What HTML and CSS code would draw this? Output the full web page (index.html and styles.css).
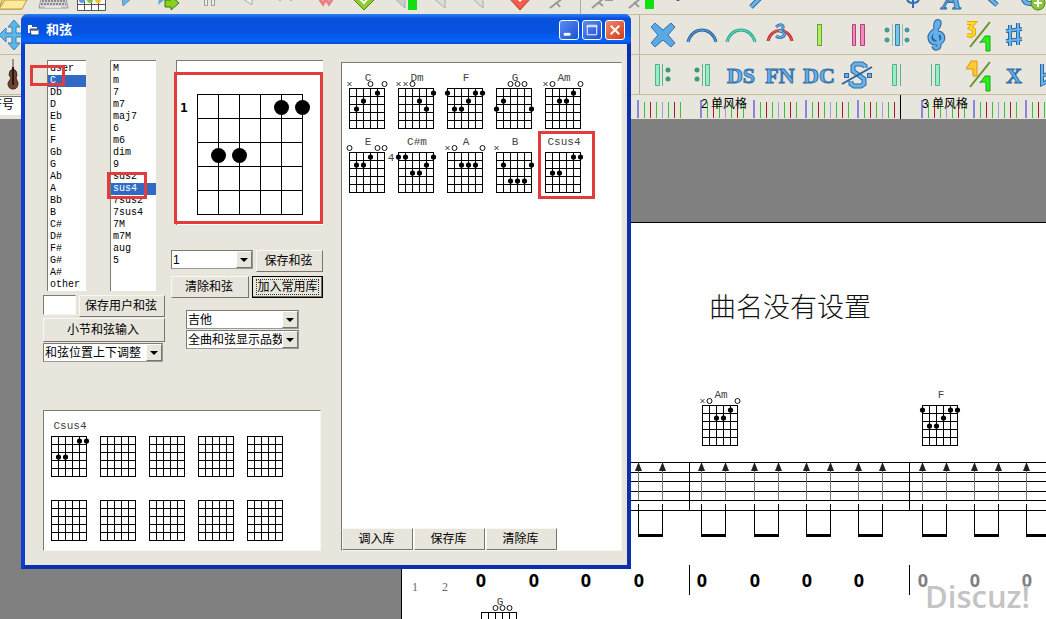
FILE: index.html
```html
<!DOCTYPE html>
<html lang="zh-CN">
<head>
<meta charset="utf-8">
<title>和弦</title>
<link rel="stylesheet" href="styles.css">
</head>
<body>
<div class="app">
  <div class="toolbar toolbar-files">
    <button class="tool" aria-label="打开"><svg viewBox="0 0 39 14"><path d="M8 0L5 9H28L32 -3" fill="#f7dc7a" stroke="#b89a3c"/><path d="M5 9L11 0H33L28 9Z" fill="#ffeb9a" stroke="#b89a3c"/></svg></button>
    <button class="tool" aria-label="键盘"><svg viewBox="0 0 39 14"><path d="M9 -6H32L35 8H6Z" fill="#d4d4d4" stroke="#9a9a9a"/><path d="M9 1H32M8 4H33" stroke="#8a8a8a" stroke-width="2" stroke-dasharray="2 1"/><path d="M12 7H28" stroke="#fff"/></svg></button>
    <button class="tool" aria-label="和弦图"><svg viewBox="0 0 39 14"><path d="M5.500 -2V10.500H33.500V-2M12.500 -2V10M19.500 -2V10M26.500 -2V10M5 4.500H34" fill="#fff" stroke="#555"/><circle cx="10" cy="0" r="3" fill="#5b9be0"/><circle cx="18" cy="0" r="3" fill="#82c341"/><circle cx="26" cy="0" r="3" fill="#f2c230"/></svg></button>
    <button class="tool" aria-label="编辑"><svg viewBox="0 0 39 14"><path d="M11 -2L12 6L21 -2" fill="#6ab4e8" stroke="#5590c0"/></svg></button>
    <button class="tool" aria-label="导出"><svg viewBox="0 0 39 14"><path d="M9 -1L8 5L15 -1" fill="#5aa4e0"/><path d="M15 0H21V-4L29 3L21 10V7H15Z" fill="#8ad020" stroke="#39770d"/></svg></button>
    <button class="tool" aria-label="暂停"><svg viewBox="0 0 39 14"><path d="M15.500 -2V5.500H18.500V-2M22.500 -2V5.500H25.500V-2" fill="#eee" stroke="#999"/></svg></button>
    <button class="tool" aria-label="后退"><svg viewBox="0 0 39 14"><path d="M15 -1L24 5V-2" fill="#eee" stroke="#aaa"/></svg></button>
    <button class="tool" aria-label="标记"><svg viewBox="0 0 39 14"><path d="M11 -2L13 1L15 -2M22 -2L24 1L26 -2" fill="none" stroke="#aaa"/></svg></button>
    <button class="tool" aria-label="波形"><svg viewBox="0 0 39 14"><path d="M13 -2L17 4L20 -1L23 4L27 -2" fill="none" stroke="#e88080" stroke-width="3"/></svg></button>
    <button class="tool" aria-label="确认"><svg viewBox="0 0 39 14"><path d="M7 -2L19 10L31 -2Z" fill="#8ccc2c" stroke="#4c8417"/><path d="M14 -2L19 3L24 -3" fill="none" stroke="#fff" stroke-width="2"/></svg></button>
    <button class="tool" aria-label="标签"><svg viewBox="0 0 39 14"><path d="M10 -2L21 8V-2" fill="#ccc" stroke="#aaa"/><rect x="24" y="0" width="9" height="10" fill="#10e010"/></svg></button>
    <button class="tool" aria-label="上一步"><svg viewBox="0 0 39 14"><path d="M10 -2L22 8V-2" fill="#ddd" stroke="#aaa"/></svg></button>
    <button class="tool" aria-label="下一步"><svg viewBox="0 0 39 14"><path d="M10 -2L21 8V-2" fill="#ddd" stroke="#aaa"/></svg></button>
    <button class="tool" aria-label="取消"><svg viewBox="0 0 39 14"><path d="M8 -2L19 10L30 -2Z" fill="#f25c4c" stroke="#c33"/><path d="M15 -2L19 2L23 -2" fill="#fff"/></svg></button>
    <button class="tool" aria-label="剪切"><svg viewBox="0 0 39 14"><path d="M10 8L23 -2M16 2L20 7" fill="none" stroke="#999" stroke-width="2"/></svg></button>
    <i class="divider"></i>
    <button class="tool" aria-label="分割"><svg viewBox="0 0 39 14"><path d="M10 8L22 -2M16 2L21 6M23 0H31" fill="none" stroke="#999" stroke-width="2"/></svg></button>
    <button class="tool" aria-label="合并"><svg viewBox="0 0 39 14"><path d="M8 8L20 -2M13 2L18 7" fill="none" stroke="#999" stroke-width="2"/><rect x="24" y="0" width="9" height="9" fill="#10e010"/></svg></button>
    <button class="tool" aria-label="节点"><svg viewBox="0 0 39 14"><circle cx="18" cy="-1" r="2" fill="#447"/></svg></button>
    <button class="tool" aria-label="空白"></button>
    <button class="tool" aria-label="画笔"><svg viewBox="0 0 39 14"><path d="M13 7L22 -2" class="blue-edge"/><path d="M13 7L22 -2" class="blue-core"/></svg></button>
    <button class="tool" aria-label="音量"></button>
    <button class="tool" aria-label="节拍"></button>
    <button class="tool" aria-label="速度"></button>
    <button class="tool" aria-label="锚点"><svg viewBox="0 0 39 14"><path d="M13 -2Q13 3 19 3Q25 3 25 -2M19 -2V8" fill="none" stroke="#336fb0" stroke-width="2"/></svg></button>
    <button class="tool" aria-label="文字"><svg viewBox="0 0 39 14"><text x="19" y="9" class="music-text letter-a">A</text></svg></button>
    <button class="tool" aria-label="直线"><svg viewBox="0 0 39 14"><path d="M16 -3L25 5" class="blue-edge"/><path d="M16 -3L25 5" class="blue-core"/></svg></button>
    <button class="tool" aria-label="添加"><svg viewBox="0 0 39 14"><path d="M12 -2Q14 5 22 3" class="blue-edge"/><path d="M12 -2Q14 5 22 3" class="blue-core"/><circle cx="27" cy="3" r="7" fill="#8ac53a" stroke="#4a8a18"/><path d="M27 -1V7M23 3H31" stroke="#fff" stroke-width="2"/></svg></button>
  </div>

  <div class="toolbar toolbar-notation">
    <button class="tool tool-edge" aria-label="移动"><svg viewBox="0 0 30 39"><path d="M14 5L20 12H16V18H23V13L29 20L23 27V22H16V28H20L14 35L8 28H12V22H6V27L-1 20L6 13V18H12V12H8Z" fill="#5cb8ea" stroke="#387fb5"/></svg></button>
    <div class="tool-group">
      <button class="tool" aria-label="删除"><svg viewBox="0 0 39 39"><path d="M7 12L11 8L19 15L27 8L31 12L24 20L31 28L27 32L19 25L11 32L7 28L14 20Z" fill="#5ba9e2" stroke="#3573ad"/></svg></button>
      <button class="tool" aria-label="连音线"><svg viewBox="0 0 39 39"><path d="M5 27C9 11 29 11 33 27" fill="none" stroke="#2f639c" stroke-width="3"/><path d="M5 27C9 11 29 11 33 27" fill="none" stroke="#62b0ea"/></svg></button>
      <button class="tool" aria-label="延音线"><svg viewBox="0 0 39 39"><path d="M5 27C9 11 29 11 33 27" fill="none" stroke="#2ba890" stroke-width="3"/><path d="M5 27C9 11 29 11 33 27" fill="none" stroke="#71e6c4"/></svg></button>
      <button class="tool" aria-label="三连音"><svg viewBox="0 0 39 39"><path d="M7 26C10 12 28 12 31 26" fill="none" stroke="#b83038" stroke-width="3"/><path d="M7 26C10 12 28 12 31 26" fill="none" stroke="#f06464"/><path d="M15 12Q20 8 22 11Q23 15 18 16Q25 17 23 21Q19 24 15 21" fill="none" stroke="#3778b0" stroke-width="3"/><path d="M15 12Q20 8 22 11Q23 15 18 16Q25 17 23 21Q19 24 15 21" fill="none" stroke="#83bce8"/></svg></button>
      <button class="tool" aria-label="小节线"><svg viewBox="0 0 39 39"><rect x="17.500" y="9.500" width="4" height="21" fill="#b5ec5e" stroke="#5fa63c"/></svg></button>
      <button class="tool" aria-label="双小节线"><svg viewBox="0 0 39 39"><path d="M13.500 9.500H16.500V30.500H13.500ZM21.500 9.500H25.500V30.500H21.500Z" fill="#f28ac0" stroke="#b54178"/></svg></button>
      <button class="tool" aria-label="双反复"><svg viewBox="0 0 39 39"><path d="M17.500 9.500H21.500V30.500H17.500Z" fill="#76c3ec" stroke="#3284a5"/><path d="M14.500 9V31M24.500 9V31" stroke="#8fc4bd"/><g fill="#4ba39a" stroke="#318b86"><circle cx="9" cy="15" r="2"/><circle cx="9" cy="25" r="2"/><circle cx="29" cy="15" r="2"/><circle cx="29" cy="25" r="2"/></g></svg></button>
      <button class="tool" aria-label="谱号"><svg viewBox="0 0 39 39"><defs><path id="clef" d="M20 24C16 23 17 18 21 18C27 18 28 27 21 28C12 29 11 21 16 17C21 13 23 10 22 7C19 5 18 10 19 15L22 30C22 34 17 34 17 31"/></defs><use href="#clef" fill="none" stroke="#2b6099" stroke-width="5"/><use href="#clef" fill="none" stroke="#63b0ed" stroke-width="3"/></svg></button>
      <button class="tool" aria-label="拍号"><svg viewBox="0 0 39 39"><path d="M14 32L34 7" stroke="#6b8d2d" stroke-width="2"/><path d="M11 8H18L14 13L18 15V19L15 21L11 20" fill="none" stroke="#eda900" stroke-width="4"/><path d="M11 8H18L14 13L18 15V19L15 21L11 20" fill="none" stroke="#ffdb35" stroke-width="2"/><path d="M24 28L29 21H34V36H30V27H24Z" fill="#27f216" stroke="#16a914"/></svg></button>
      <button class="tool" aria-label="升号"><svg viewBox="0 0 39 39"><path d="M15 10V31M23 8V30M11 16L27 14M11 26L27 24" class="blue-edge thin"/><path d="M15 10V31M23 8V30M11 16L27 14M11 26L27 24" class="blue-core thin"/></svg></button>
    </div>
  </div>

  <div class="toolbar toolbar-notation">
    <button class="tool tool-edge" aria-label="乐器"><svg viewBox="0 0 30 39"><path d="M13 4V22" stroke="#65412f"/><path d="M13 14Q9 15 9 20L11 23L8 28Q8 34 13 34Q18 34 18 28L16 23L17 20Q17 15 13 14" fill="#72442f" stroke="#3d2925"/><path d="M13 12V30" stroke="#1e1a1a" stroke-width="2"/></svg></button>
    <div class="tool-group">
      <button class="tool" aria-label="反复开始"><svg viewBox="0 0 39 39"><path d="M11.500 9.500H15.500V30.500H11.500Z" fill="#99edc5" stroke="#49b58a"/><path d="M18.500 9V31" stroke="#57b491"/><circle cx="24" cy="15" r="2.500" fill="#369b76"/><circle cx="24" cy="24" r="2.500" fill="#369b76"/></svg></button>
      <button class="tool" aria-label="反复结束"><svg viewBox="0 0 39 39"><path d="M22.500 9.500H26.500V30.500H22.500Z" fill="#99edc5" stroke="#49b58a"/><path d="M19.500 9V31" stroke="#57b491"/><circle cx="14" cy="15" r="2.500" fill="#369b76"/><circle cx="14" cy="24" r="2.500" fill="#369b76"/></svg></button>
      <button class="tool" aria-label="DS"><svg viewBox="0 0 39 39"><text x="19" y="28" class="music-text">DS</text></svg></button>
      <button class="tool" aria-label="FN"><svg viewBox="0 0 39 39"><text x="19" y="28" class="music-text">FN</text></svg></button>
      <button class="tool" aria-label="DC"><svg viewBox="0 0 39 39"><text x="19" y="28" class="music-text">DC</text></svg></button>
      <button class="tool" aria-label="记号"><svg viewBox="0 0 39 39"><path d="M26 13V11L23 9H16L14 11V16L25 24V29L22 31H15L12 29V26" class="blue-edge"/><path d="M26 13V11L23 9H16L14 11V16L25 24V29L22 31H15L12 29V26" class="blue-core"/><path d="M3 29L33 12" stroke="#2a639d" stroke-width="2"/><g fill="#68adeb" stroke="#2b669e"><rect x="5.500" y="18.500" width="4" height="4"/><rect x="28.500" y="18.500" width="4" height="4"/></g></svg></button>
      <button class="tool" aria-label="终止线"><svg viewBox="0 0 39 39"><path d="M14.500 9.500H18.500V30.500H14.500Z" fill="#99edc5" stroke="#49b58a"/><path d="M22.500 9V31" stroke="#57b491"/></svg></button>
      <button class="tool" aria-label="起始线"><svg viewBox="0 0 39 39"><path d="M18.500 9.500H22.500V30.500H18.500Z" fill="#99edc5" stroke="#49b58a"/><path d="M14.500 9V31" stroke="#57b491"/></svg></button>
      <button class="tool" aria-label="分拍"><svg viewBox="0 0 39 39"><path d="M14 32L34 7" stroke="#6b8d2d" stroke-width="2"/><path d="M10 14L15 6H21V21H17V14H10Z" fill="#ffcb30" stroke="#db9810"/><path d="M24 28L29 21H34V36H30V27H24Z" fill="#27f216" stroke="#16a914"/></svg></button>
      <button class="tool" aria-label="重升号"><svg viewBox="0 0 39 39"><text x="19" y="28" class="music-text">X</text></svg></button>
      <button class="tool" aria-label="降号"><svg viewBox="0 0 39 39"><path d="M8 9V29Q16 26 15 21Q13 18 8 21" class="blue-edge thin"/><path d="M8 9V29Q16 26 15 21Q13 18 8 21" class="blue-core thin"/></svg></button>
    </div>
  </div>

  <div class="ruler"><span class="corner-label">符号</span><svg id="ruler" width="1100" height="24"></svg></div>

  <main class="workspace">
    <section class="sheet">
      <h1 class="song-title">曲名没有设置</h1>
      <svg id="score" class="score" width="776" height="280" viewBox="402 360 776 280"></svg>
    </section>
  </main>

  <section class="dialog">
    <header class="titlebar">
      <svg class="form-icon" width="12" height="12" viewBox="0 0 12 12"><path d="M1 1H5V3H10V5H3V9H1Z" fill="#fff"/><path d="M3 5H12V11H4Z" fill="#fff" stroke="#1b3f8c"/><path d="M4 6H11" stroke="#111"/></svg>
      <h2 class="caption">和弦</h2>
      <button class="win-button" aria-label="最小化"><svg viewBox="0 0 19 19"><path d="M4 14H11" stroke="#fff" stroke-width="3"/></svg></button>
      <button class="win-button" aria-label="最大化"><svg viewBox="0 0 19 19"><path d="M4.500 4.500H14.500V14.500H4.500ZM4 6H15" fill="none" stroke="#fff"/></svg></button>
      <button class="win-button win-close" aria-label="关闭"><svg viewBox="0 0 19 19"><path d="M5 5L14 14M14 5L5 14" stroke="#fff" stroke-width="2"/></svg></button>
    </header>
    <div class="dialog-body">
      <div class="editor">
        <div class="picker">
          <div class="choose">
            <div class="lists">
              <select class="list root-list" size="19" aria-label="根音"><option>user</option><option selected>C</option><option>Db</option><option>D</option><option>Eb</option><option>E</option><option>F</option><option>Gb</option><option>G</option><option>Ab</option><option>A</option><option>Bb</option><option>B</option><option>C#</option><option>D#</option><option>F#</option><option>G#</option><option>A#</option><option>other</option></select>
              <select class="list type-list" size="19" aria-label="和弦类型"><option>M</option><option>m</option><option>7</option><option>m7</option><option>maj7</option><option>6</option><option>m6</option><option>dim</option><option>9</option><option>sus2</option><option selected>sus4</option><option>7sus2</option><option>7sus4</option><option>7M</option><option>m7M</option><option>aug</option><option>5</option></select>
            </div>
            <div class="row"><input class="name-input" type="text" aria-label="用户和弦名"><button class="push grow">保存用户和弦</button></div>
            <button class="push tall">小节和弦输入</button>
            <span class="combo position-combo"><select aria-label="和弦位置"><option>和弦位置上下调整</option></select><i class="combo-arrow"></i></span>
          </div>
          <div class="shape">
            <div class="board"><svg id="board" width="145" height="164"></svg></div>
            <div class="row"><span class="combo fret-combo"><select aria-label="品位"><option>1</option></select><i class="combo-arrow"></i></span><button class="push grow">保存和弦</button></div>
            <div class="row row-library"><button class="push clear-button">清除和弦</button><button class="push default grow"><span>加入常用库</span></button></div>
            <div class="options">
              <span class="combo"><select aria-label="乐器"><option>吉他</option></select><i class="combo-arrow"></i></span>
              <span class="combo"><select aria-label="显示方式"><option>全曲和弦显示品数</option></select><i class="combo-arrow"></i></span>
            </div>
          </div>
        </div>
        <div class="well saved"><div class="chords" id="saved"></div></div>
      </div>
      <div class="well library">
        <div class="chords" id="library"></div>
        <div class="library-actions"><button class="push">调入库</button><button class="push">保存库</button><button class="push">清除库</button></div>
      </div>
    </div>
    <i class="mark mark-root"></i>
    <i class="mark mark-type"></i>
    <i class="mark mark-board"></i>
    <i class="mark mark-chord"></i>
  </section>
  <div class="watermark">Discuz!</div>
</div>
<script src="script.js"></script>
</body>
</html>
```
FILE: styles.css
```css
* { box-sizing: border-box; }
:root {
  --face: #e8e5dc;
  --shade: #7c7a74;
  --cjk: "Liberation Sans", "Noto Sans CJK SC", sans-serif;
  --mono: "Liberation Mono", "Noto Sans CJK SC", monospace;
}
body { margin: 0; font: 12px/16px var(--cjk); color: #000; }
button, select, input { font: inherit; color: inherit; margin: 0; border-radius: 0; }
svg { display: block; }

.app { position: relative; display: flex; flex-direction: column; height: 100vh; overflow: hidden; background: #808080; }

.toolbar { display: flex; flex: none; background: var(--face); border-bottom: 1px solid #c4bd95; overflow: hidden; }
.toolbar-files { height: 15px; }
.toolbar-files .tool:first-child { margin-left: -6px; }
.toolbar-notation { height: 40px; }
.tool { flex: none; width: 39px; height: 39px; padding: 0; border: 0; background: none; }
.toolbar-files .tool { height: 14px; }
.tool svg { width: 100%; height: 100%; overflow: visible; }
.toolbar-notation .tool-edge { width: 30px; }
.tool-group { display: flex; margin-left: 609px; padding-left: 4px; border-left: 1px solid #aaa; }
.divider { flex: none; width: 1px; margin: 0 1px; background: #aaa; }
.blue-edge { fill: none; stroke: #2d689f; stroke-width: 5; }
.blue-core { fill: none; stroke: #69b4ed; stroke-width: 3; }
.blue-edge.thin { stroke-width: 4; }
.blue-core.thin { stroke-width: 2; }
.music-text { font: bold 22px "Liberation Serif", serif; text-anchor: middle; fill: #6ab2eb; stroke: #2f70aa; stroke-width: 1; }
.letter-a { font-size: 30px; font-style: italic; }

.ruler { display: flex; flex: none; height: 24px; background: var(--face); position: relative; overflow: hidden; }
.corner-label { position: absolute; left: 0; top: 1px; width: 21px; height: 19px; background: #fff; border-top: 1px solid #777; direction: rtl; white-space: nowrap; padding-right: 7px; overflow: hidden; }
.ruler text { font: 12px var(--cjk); }

.workspace { flex: 1; min-height: 0; padding-top: 103px; padding-left: 401px; overflow: hidden; background: #808080; }
.sheet { width: 778px; min-height: 100%; background: #fff; border: 1px solid #000; }
.song-title { margin: 0; padding: 65px 0 36px; font: 300 27px/36px "Noto Sans CJK SC", sans-serif; color: #111; text-align: center; }
.score { overflow: visible; }
.small-number { font: 12px "Liberation Serif", serif; fill: #666; text-anchor: middle; }
.rest { font: bold 18px "Open Sans", sans-serif; text-anchor: middle; }
.faded { fill: #808080; }
.chord-name { font: 11px var(--mono); fill: #444; text-anchor: middle; }

.dialog { position: absolute; left: 21px; top: 14px; width: 610px; height: 555px; display: flex; flex-direction: column; border: solid #0b3fd0; border-width: 0 4px 4px; border-right-color: #0a2fb0; border-bottom-color: #0a2fb0; border-radius: 7px 7px 0 0; background: var(--face); }
.titlebar { display: flex; align-items: center; gap: 3px; height: 30px; flex: none; margin: 0 -4px; padding: 2px 6px 0 6px; border-radius: 7px 7px 0 0; background: linear-gradient(#2a83f5, #0a50dc 15%, #0553e0 60%, #0464fa 90%, #0748c8); }
.caption { flex: 1; margin: 0 0 0 4px; color: #fff; font: bold 13px/20px var(--cjk); }
.form-icon { flex: none; }
.win-button { width: 20px; height: 20px; padding: 0; border: 1px solid #fff; border-radius: 3px; background: linear-gradient(135deg, #5a8df0, #1c4fd0); }
.win-button svg { width: 18px; height: 18px; }
.win-close { background: linear-gradient(135deg, #ee8a6b, #d03c18); }

.dialog-body { flex: 1; display: flex; gap: 18px; padding: 16px 5px 14px 18px; min-height: 0; }
.editor { display: flex; flex-direction: column; justify-content: space-between; width: 280px; }
.picker { display: flex; gap: 6px; }
.choose { display: flex; flex-direction: column; gap: 1px; width: 122px; }
.lists { display: flex; gap: 24px; padding-left: 4px; margin-bottom: 3px; }
.list { height: 231px; padding: 2px 0 0; border: 0; border-top: 1px solid var(--shade); border-left: 1px solid var(--shade); outline: 0; background: #fff; overflow: hidden; font: 10px/12px var(--mono); }
.list option { height: 12px; min-height: 12px; padding: 0 2px; line-height: 12px; }
.list option:checked { background: #316ac5 linear-gradient(#316ac5, #316ac5); color: #fff; -webkit-text-fill-color: #fff; }
.root-list { width: 39px; }
.type-list { width: 46px; }
.row { display: flex; gap: 3px; }
.grow { flex: 1; }
.push { height: 22px; padding: 0 2px 0 0; border: 1px solid; border-color: #f8f7f1 #77756d #77756d #f8f7f1; background: var(--face); white-space: nowrap; line-height: 18px; }
.tall { height: 24px; }
.name-input { width: 33px; height: 20px; padding: 0 2px; border: 1px solid; border-color: var(--shade) #f8f7f1 #f8f7f1 var(--shade); background: #fff; }
.combo { position: relative; display: block; height: 19px; }
.combo select { width: 100%; height: 100%; padding: 0 16px 0 1px; appearance: none; border: 1px solid; border-color: var(--shade) #999 #999 var(--shade); background: #fff; line-height: 16px; }
.combo-arrow { position: absolute; right: 1px; top: 1px; bottom: 1px; width: 16px; display: grid; place-items: center; background: var(--face); border: 1px solid; border-color: #fff #77756d #77756d #fff; pointer-events: none; }
.combo-arrow::after { content: ""; border: solid transparent; border-width: 4px 4px 0; border-top-color: #000; }
.position-combo { width: 120px; }
.shape { width: 152px; }
.board { margin: 0 0 25px 5px; border-top: 1px solid var(--shade); border-left: 1px solid var(--shade); background: #fff; }
.board text { font: bold 13px "DejaVu Sans Mono", monospace; }
.fret-combo { width: 82px; }
.row-library { margin-top: 4px; }
.clear-button { width: 78px; }
.default { border-color: #000; padding: 1px; box-shadow: inset -1px -1px #77756d; }
.default span { display: block; margin: 0 2px; border: 1px dotted #333; line-height: 14px; }
.options { display: grid; gap: 1px; width: 113px; margin: 12px 0 0 15px; }
.well { background: #fff; border: 1px solid; border-color: var(--shade) #f8f7f1 #f8f7f1 var(--shade); }
.saved { height: 141px; margin-right: 2px; }
.chords { display: grid; grid-template-columns: repeat(5, 49px); padding: 5px 1px; }
.chords svg { overflow: visible; }
.library { flex: 1; display: flex; flex-direction: column; justify-content: space-between; margin-top: 2px; }
.library-actions { display: flex; gap: 1px; }
.library-actions .push { width: 71px; }

.mark { position: absolute; border: 3px solid #e23c3c; pointer-events: none; }
.mark-root { left: 5px; top: 51px; width: 35px; height: 21px; }
.mark-type { left: 82px; top: 158px; width: 40px; height: 27px; }
.mark-board { left: 149px; top: 58px; width: 149px; height: 152px; }
.mark-chord { left: 513px; top: 117px; width: 57px; height: 68px; }
.watermark { position: absolute; right: 16px; bottom: 3px; font: 600 31px/40px "Open Sans", sans-serif; color: #c4c4c4; }
```
FILE: script.js
```js
// Draws one chord diagram. The shape has one character per string:
// x = muted, o = open, - = nothing, a digit = the fret row with a finger.
function chordMarkup(name, shape, base, x, y) {
  let out = '<path d="';
  for (let s = 0; s < 6; s++) out += `M${x + s * 7 + 0.5} ${y}V${y + 41}`;
  for (let f = 0; f < 6; f++) out += `M${x} ${y + f * 8 + 0.5}H${x + 36}`;
  out += '" stroke="#000" fill="none"/>';
  [...shape].forEach((c, s) => {
    const cx = x + s * 7 + 0.5;
    if (c === 'x') out += `<path d="M${cx - 2} ${y - 6}l4 4m0 -4l-4 4" stroke="#333"/>`;
    else if (c === 'o') out += `<circle cx="${cx}" cy="${y - 4}" r="2.500" fill="none" stroke="#111"/>`;
    else if (c !== '-') out += `<circle cx="${cx}" cy="${y + c * 8 - 3}" r="2.600"/>`;
  });
  if (name) out += `<text class="chord-name" x="${x + 19}" y="${y - 7}">${name}</text>`;
  if (base) out += `<text class="chord-name" x="${x - 7}" y="${y + 9}">${base}</text>`;
  return out;
}

function fillChords(id, chords) {
  document.getElementById(id).innerHTML = chords
    .map(([n, s, b]) => `<svg width="49" height="64">${chordMarkup(n, s, b, 6, 20)}</svg>`)
    .join('');
}

fillChords('library', [
  ['C', 'x32o1o'], ['Dm', 'xxo231'], ['F', '133211'], ['G', '32ooo3'], ['Am', 'xo221o'],
  ['E', 'o221oo'], ['C#m', '113321', 4], ['A', 'xo222o'], ['B', 'x24442'], ['Csus4', '-33-11']
]);
fillChords('saved', [['Csus4', '-33-11'], ...Array(9).fill(['', '------'])]);

// Large fretboard
let board = '<path d="';
for (let s = 0; s < 6; s++) board += `M${20.5 + s * 21} 33V154`;
for (let f = 0; f < 6; f++) board += `M20 ${33.5 + f * 24}H126`;
board += '" stroke="#000" fill="none"/><text x="3" y="51">1</text>';
[[4, 1], [5, 1], [1, 3], [2, 3]].forEach(([s, f]) => {
  board += `<circle cx="${20.5 + s * 21}" cy="${22.5 + f * 24}" r="7.500"/>`;
});
document.getElementById('board').innerHTML = board;

// Beat ruler
const beats = [638, 701, 754, 806, 858, 922, 974, 1026];
const tickColors = ['#8a86e0', '#35c235', '#a02020', '#35c235', '#a09cd8', '#35c235', '#a02020', '#35c235'];
let ruler = '';
beats.forEach(b => tickColors.forEach((c, i) => {
  ruler += `<path d="M${b + i * 6} ${i ? 7 : 5}V23" stroke="${c}" stroke-width="${i ? 1 : 2}" shape-rendering="crispEdges"/>`;
}));
ruler += '<path d="M900.5 0V24" stroke="#000"/><text x="701" y="13">2 单风格</text><text x="922" y="13">3 单风格</text>';
document.getElementById('ruler').innerHTML = ruler;

// Tablature staff
let score = '<path d="';
[462, 472, 481, 491, 500, 510].forEach(y => { score += `M402 ${y + 0.5}H1178`; });
[689, 909].forEach(x => { score += `M${x + 0.5} 462V511M${x + 0.5} 565V595`; });
score += '" stroke="#000"/>';
beats.forEach(b => {
  [b, b + 24].forEach(x => {
    score += `<path d="M${x}.5 470V500" stroke="#777"/><path d="M${x - 3} 471H${x + 4}L${x}.5 462Z" fill="#222"/>`;
    score += `<path d="M${x}.5 504V536" stroke="#000"/>`;
  });
  score += `<path d="M${b} 535.5H${b + 25}" stroke="#000" stroke-width="3"/>`;
});
[480, 533, 585, ...beats].forEach(x => {
  score += `<text class="rest${x > 909 ? ' faded' : ''}" x="${x + 1}" y="587">0</text>`;
});
score += '<text class="small-number" x="415" y="591">1</text><text class="small-number" x="445" y="591">2</text>';
score += chordMarkup('Am', 'xo221o', 0, 702, 405) + chordMarkup('F', '133211', 0, 922, 405) + chordMarkup('G', '32ooo3', 0, 481, 612);
document.getElementById('score').innerHTML = score;
```
